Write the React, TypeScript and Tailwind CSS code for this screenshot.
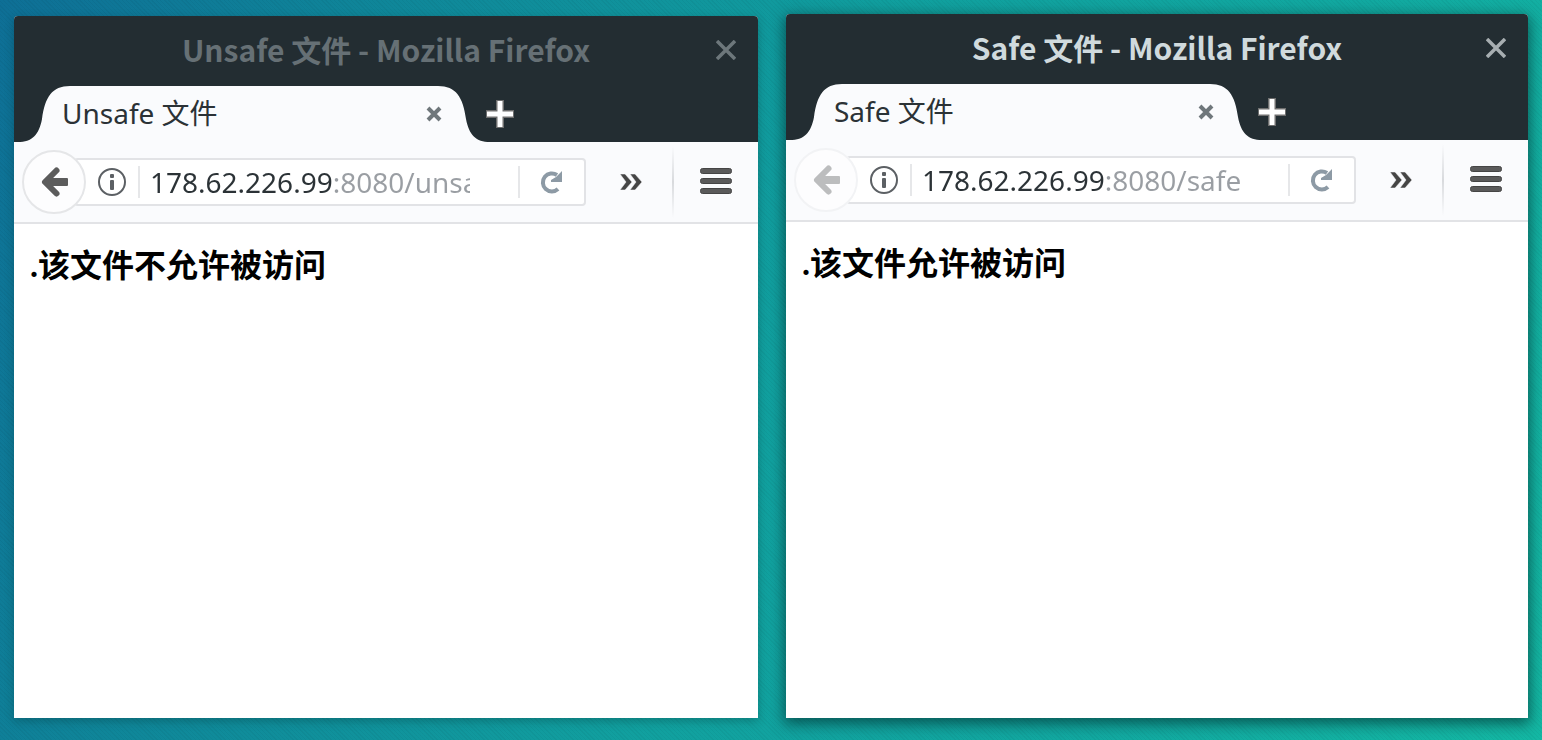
import React, { useState } from 'react';
import clsx from 'clsx';

interface BrowserWindowProps {
  title: string;
  url: string;
  message: string;
  active?: boolean;
  canGoBack?: boolean;
  className?: string;
}

function TabShape() {
  return (
    <div className="absolute inset-0 flex" aria-hidden="true">
      <svg viewBox="0 0 52 56" className="h-14 w-13 shrink-0">
        <path d="M0 56C14 56 21 49 24 33C27 11 34 0 52 0V56Z" fill="#fafbfd" />
      </svg>
      <div className="flex-1 bg-[#fafbfd]" />
      <svg viewBox="0 0 52 56" className="h-14 w-13 shrink-0">
        <path d="M52 56C38 56 31 49 28 33C25 11 18 0 0 0V56Z" fill="#fafbfd" />
      </svg>
    </div>
  );
}

function BackIcon() {
  return (
    <svg viewBox="0 0 28 32" className="h-8 w-7">
      <path d="M17 4L4 16L17 28L17 28L9 16L17 4Z" fill="currentColor" />
      <path
        d="M16.5 4.5L5 16L16.5 27.5"
        fill="none"
        stroke="currentColor"
        strokeWidth="6"
        strokeLinecap="round"
        strokeLinejoin="round"
      />
      <rect x="6" y="12" width="22" height="8" rx="1" fill="currentColor" />
    </svg>
  );
}

function InfoIcon() {
  return (
    <svg viewBox="0 0 28 28" className="h-7 w-7">
      <circle cx="14" cy="14" r="13" fill="none" stroke="#5c6064" strokeWidth="2" />
      <rect x="12" y="6" width="4" height="4" rx="1" fill="#5c6064" />
      <rect x="12" y="12" width="4" height="10" rx="1" fill="#5c6064" />
    </svg>
  );
}

function ReloadIcon() {
  return (
    <svg viewBox="0 0 24 24" className="h-6 w-6">
      <path d="M18 19A9 9 0 1 1 17 5" fill="none" stroke="#8d9aa5" strokeWidth="4" />
      <path d="M22 1V12H11V10L16 7Z" fill="#8d9aa5" />
    </svg>
  );
}

function BrowserWindow({ title, url, message, active, canGoBack, className }: BrowserWindowProps) {
  const [address, setAddress] = useState(url);

  return (
    <section
      className={clsx(
        'flex min-w-0 flex-col overflow-hidden rounded-t-sm bg-white',
        active ? 'shadow-[0_4px_14px_2px_rgba(0,40,40,0.6)]' : 'shadow-[0_3px_10px_rgba(0,40,40,0.3)]',
        className
      )}
    >
      {/* Title bar */}
      <header className="relative flex h-[70px] items-center justify-center bg-[#232d32] pb-1">
        <h1
          className={clsx(
            "text-[30px] leading-10 font-bold whitespace-nowrap font-['Noto_Sans_CJK_SC',sans-serif]",
            active ? 'text-[#d0dadd]' : 'text-[#667075]'
          )}
        >
          {title} - Mozilla Firefox
        </h1>
        <button
          type="button"
          aria-label="Close window"
          className={clsx('absolute top-6 right-[22px]', active ? 'text-[#a7aeb1]' : 'text-[#6d777b]')}
        >
          <svg viewBox="0 0 20 20" className="h-5 w-5">
            <path d="M1 1L19 19M19 1L1 19" stroke="currentColor" strokeWidth="3.5" />
          </svg>
        </button>
      </header>

      {/* Tab strip */}
      <div className="flex h-14 items-center bg-[#232d32] pl-1">
        <div className="relative h-14 w-[472px]">
          <TabShape />
          <div className="relative flex h-full items-center justify-between pr-12 pl-11">
            <span className="pb-0.5 text-[28px] leading-9 text-[#2b3236] font-['Noto_Sans','Noto_Sans_CJK_SC',sans-serif]">
              {title}
            </span>
            <button type="button" aria-label="Close tab">
              <svg viewBox="0 0 16 16" className="h-4 w-4">
                <path d="M2 2L14 14M14 2L2 14" stroke="#6f777b" strokeWidth="4" />
              </svg>
            </button>
          </div>
        </div>
        <button type="button" aria-label="New tab" className="-ml-1">
          <svg viewBox="0 0 28 28" className="h-7 w-7">
            <path d="M14 0V28M0 14H28" stroke="#6e6e6e" strokeWidth="8" />
            <path d="M14 1V27M1 14H27" stroke="#ffffff" strokeWidth="5" />
          </svg>
        </button>
      </div>

      {/* Toolbar */}
      <div className="flex h-[82px] items-center border-b-2 border-[#e2e3e6] bg-[#fafbfd] pl-2">
        <button
          type="button"
          aria-label="Back"
          disabled={!canGoBack}
          className={clsx(
            'relative flex h-16 w-16 shrink-0 items-center justify-center rounded-full border-2 bg-[#fdfdfe]',
            canGoBack ? 'border-[#e5e6e8] text-[#5c5c5c]' : 'border-[#f2f3f5] text-[#bcbdbe]'
          )}
        >
          <BackIcon />
        </button>
        <div className="-ml-3 flex h-12 min-w-0 flex-1 items-center rounded-sm border-2 border-[#e2e3e6] bg-white pr-5 pl-[22px]">
          <InfoIcon />
          <div className="mr-2.5 ml-3 h-8 w-0.5 shrink-0 bg-[#e6e7e9]" />
          {/* Host is dark, port and path are dimmed */}
          <input
            type="text"
            aria-label="Address"
            value={address}
            onChange={(e) => setAddress(e.target.value)}
            className="h-10 min-w-0 flex-1 bg-[linear-gradient(to_right,#2b3236_183px,#9a9ea3_183px)] bg-clip-text text-[28px] leading-10 text-transparent caret-black outline-hidden font-['Noto_Sans',sans-serif]"
          />
          <div className="mr-5 ml-12 h-8 w-0.5 shrink-0 bg-[#e6e7e9]" />
          <button type="button" aria-label="Reload">
            <ReloadIcon />
          </button>
        </div>
        <button type="button" aria-label="More tools" className="mr-7 ml-8 shrink-0">
          <svg viewBox="0 0 26 18" className="h-[18px] w-[26px]">
            <path
              d="M2 1H7L14 9L7 17H2L8 9ZM12 1H17L24 9L17 17H12L18 9Z"
              fill="#454545"
              stroke="#fafbfd"
              strokeWidth="0.5"
            />
          </svg>
        </button>
        <div className="h-[72px] w-0.5 shrink-0 bg-linear-to-b from-transparent via-[#d8dadd] to-transparent" />
        <button type="button" aria-label="Open menu" className="mx-[26px] shrink-0">
          <svg viewBox="0 0 32 28" className="h-7 w-8">
            <g fill="#5a5a5a" stroke="#454545">
              <rect x="0.5" y="0.5" width="31" height="5" rx="2" />
              <rect x="0.5" y="10.5" width="31" height="5" rx="2" />
              <rect x="0.5" y="20.5" width="31" height="5" rx="2" />
            </g>
          </svg>
        </button>
      </div>

      <main className="flex-1 px-4 py-5">
        <p className="text-[32px] leading-[44px] font-bold text-black font-['Liberation_Serif','Noto_Sans_CJK_SC',sans-serif]">
          {message}
        </p>
      </main>
    </section>
  );
}

export default function App() {
  return (
    <div
      lang="zh-CN"
      className="flex min-h-screen bg-[repeating-linear-gradient(45deg,rgba(0,0,0,0.04)_0_1px,transparent_1px_3px),linear-gradient(110deg,#0e6f96_0%,#0f8599_20%,#11a09f_50%,#12a9a1_75%,#14b8a4_100%)]"
    >
      <div className="grid flex-1 grid-cols-[744fr_742fr] gap-7 px-3.5 pt-3.5 pb-[22px]">
        <BrowserWindow
          title="Unsafe 文件"
          url="178.62.226.99:8080/unsafe"
          message=".该文件不允许被访问"
          canGoBack
          className="mt-0.5"
        />
        <BrowserWindow
          title="Safe 文件"
          url="178.62.226.99:8080/safe"
          message=".该文件允许被访问"
          active
        />
      </div>
    </div>
  );
}
